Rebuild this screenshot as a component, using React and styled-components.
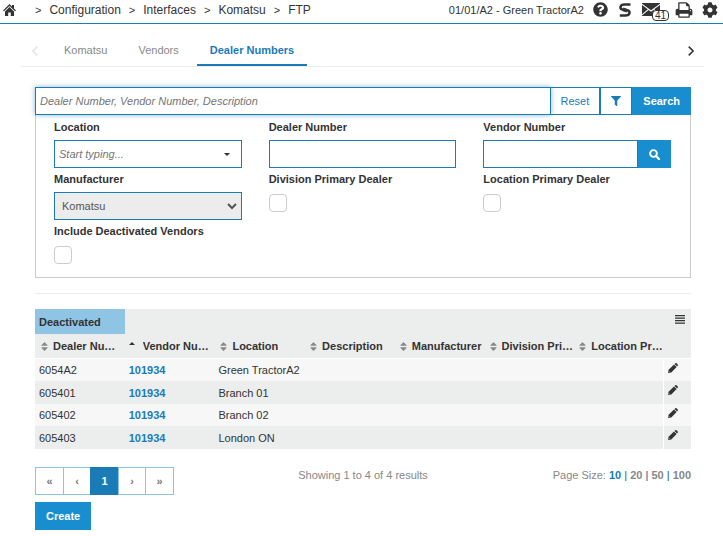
import React from "react";
import styled, { createGlobalStyle } from "styled-components";
import { FaQuestionCircle, FaCog, FaFilter, FaSort } from "react-icons/fa";

const GlobalStyle = createGlobalStyle`
  *, *::before, *::after {
    box-sizing: border-box;
  }

  body {
    margin: 0;
    background: #fff;
    color: #333;
    font-family: "Liberation Sans", Arial, sans-serif;
    font-size: 11px;
    line-height: 16px;
  }

  button, input, select {
    font: inherit;
    color: inherit;
    margin: 0;
    border-radius: 0;
  }

  button {
    padding: 0;
    cursor: pointer;
  }

  svg {
    display: block;
  }
`;

const TopBar = styled.header`
  display: flex;
  align-items: flex-start;
  justify-content: space-between;
  height: 24px;
  padding: 0 5px 0 3px;
  border-bottom: 1px solid #1a7bb7;
`;

const Crumbs = styled.nav`
  display: flex;
  align-items: center;
  gap: 8px;
  height: 20px;
  font-size: 12px;
`;

const CrumbLink = styled.a`
  color: #333;
  text-decoration: none;
`;

const HomeLink = styled(CrumbLink)`
  margin-right: 11px;
`;

const Separator = styled.span`
  font-size: 11px;
`;

const Tools = styled.div`
  display: flex;
  align-items: center;
  height: 19px;
`;

const Branch = styled.span`
  margin-right: 2px;
`;

const ToolButton = styled.button`
  position: relative;
  display: flex;
  justify-content: center;
  width: ${(props) => props.$width}px;
  border: none;
  background: none;
`;

const Badge = styled.span`
  position: absolute;
  left: 16px;
  top: 7px;
  height: 11px;
  padding: 0 2px;
  border: 1px solid #333;
  border-radius: 4px;
  background: #fff;
  font-size: 10px;
  line-height: 9px;
`;

const Tabs = styled.nav`
  display: flex;
  align-items: center;
  gap: 5px;
  height: 43px;
  margin: 0 19px 0 21px;
  padding-right: 10px;
  border-bottom: 1px solid #ececec;
`;

const TabArrow = styled.button`
  display: flex;
  width: ${(props) => (props.$end ? "6px" : "25px")};
  margin-left: ${(props) => (props.$end ? "auto" : "0")};
  padding: ${(props) => (props.$end ? "12px 0 0" : "12px 0 0 11px")};
  border: none;
  background: none;
  color: ${(props) => (props.disabled ? "#e4e4e4" : "#333")};
`;

const Tab = styled.a`
  align-self: stretch;
  padding: 18px 13px 0;
  border-bottom: 2px solid ${(props) => (props.$active ? "#1a7bb7" : "transparent")};
  color: ${(props) => (props.$active ? "#1a7bb7" : "#888")};
  font-weight: ${(props) => (props.$active ? "bold" : "normal")};
  text-decoration: none;
`;

const Content = styled.main`
  padding: 20px 32px 0 35px;
`;

const SearchBar = styled.div`
  display: flex;
  height: 28px;
`;

const Field = styled.input`
  flex: 1;
  width: 100%;
  min-width: 0;
  height: 28px;
  padding: 0 4px;
  border: 1px solid #1a7bb7;
  background: #fff;
  outline: none;

  &::placeholder {
    color: #757575;
    font-style: italic;
    opacity: 1;
  }
`;

const SearchField = styled(Field)`
  position: relative;
  box-shadow: 0 0 5px rgba(26, 123, 183, 0.55);
`;

const Button = styled.button`
  display: flex;
  align-items: center;
  justify-content: center;
  height: 28px;
  padding: 0 10px;
  border: 1px solid #188dd0;
  background: #188dd0;
  color: #fff;
  font-weight: bold;
`;

const OutlineButton = styled(Button)`
  border-color: #1a7bb7;
  border-left-width: ${(props) => (props.$joined ? "0" : "1px")};
  background: #fff;
  color: #1a7bb7;
  font-weight: normal;
`;

const Filters = styled.div`
  display: grid;
  grid-template-columns: repeat(3, 1fr);
  column-gap: 27px;
  padding: 0 19px 6px 18px;
  border: 1px solid #ccc;
  border-top: none;
`;

const Group = styled.div`
  height: 52px;
`;

const Label = styled.label`
  display: block;
  height: 25px;
  padding-top: 4px;
  font-weight: bold;
`;

const InputRow = styled.div`
  display: flex;
  position: relative;
`;

const DropButton = styled.button`
  position: absolute;
  right: 1px;
  top: 1px;
  width: 26px;
  height: 26px;
  padding-left: 9px;
  border: none;
  background: none;
`;

const Select = styled.select`
  width: 100%;
  height: 28px;
  padding: 0 7px;
  border: 1px solid #1a7bb7;
  background: #ececec;
  color: #555;
  opacity: 1;
  appearance: none;
`;

const SelectArrow = styled.span`
  position: absolute;
  right: 5px;
  top: 11px;
  color: #555;
  pointer-events: none;
`;

const Checkbox = styled.input`
  display: block;
  width: 18px;
  height: 18px;
  margin: 2px 0 0;
  border: 1px solid #ccc;
  border-radius: 4px;
  background: #fff;
  appearance: none;

  &:checked {
    background: #1a7bb7;
  }
`;

const Divider = styled.hr`
  height: 1px;
  margin: 15px 0;
  border: none;
  background: #ececec;
`;

const Table = styled.table`
  width: 100%;
  table-layout: fixed;
  border-collapse: separate;
  border-spacing: 0;
`;

const ActionCol = styled.col`
  width: 28px;
`;

const LegendCell = styled.td`
  height: 25px;
  padding: 0 4px;
  background: ${(props) => (props.$marked ? "#8fc4e4" : "#eceeed")};
  font-weight: bold;
`;

const MenuButton = styled.button`
  display: block;
  margin: -4px 0 0 auto;
  padding: 2px;
  border: none;
  background: none;
`;

const HeadCell = styled.th`
  height: 25px;
  padding: 0 0 0 4px;
  border-bottom: 1px solid #fff;
  background: #eceeed;
  text-align: left;
`;

const SortButton = styled.button`
  display: flex;
  align-items: center;
  gap: 5px;
  width: 100%;
  border: none;
  background: none;
  color: #888;
`;

const SortIcon = styled.span`
  flex: none;
  width: 9px;
  padding-bottom: ${(props) => (props.$sorted ? "5px" : "0")};
`;

const HeadText = styled.span`
  overflow: hidden;
  color: #333;
  font-weight: bold;
  text-overflow: ellipsis;
  white-space: nowrap;
`;

const Row = styled.tr`
  height: 22px;
  background: #f7f7f7;

  &:nth-child(even) {
    height: 23px;
    background: #eceeed;
  }
`;

const Cell = styled.td`
  padding: 0 4px;
  white-space: nowrap;
`;

const EditCell = styled(Cell)`
  border-left: 1px solid #fff;
`;

const EditButton = styled.button`
  display: block;
  margin-bottom: 5px;
  border: none;
  background: none;
`;

const VendorLink = styled.a`
  color: #1a7bb7;
  font-weight: bold;
  text-decoration: none;
`;

const TableFooter = styled.div`
  display: grid;
  grid-template-columns: 1fr auto 1fr;
  margin: 18px 0 7px;
  color: #888;
`;

const Pager = styled.nav`
  display: flex;
`;

const PageButton = styled.button`
  width: ${(props) => (props.$narrow ? "28px" : "29px")};
  height: 28px;
  margin-right: -1px;
  border: 1px solid ${(props) => (props.$active ? "#1a7bb7" : "#8cc3e3")};
  background: ${(props) => (props.$active ? "#1a7bb7" : "#fff")};
  color: ${(props) => (props.$active ? "#fff" : "#777")};
  font-weight: bold;
`;

const PageSize = styled.div`
  justify-self: end;
  color: #1a5b8c;
`;

const Muted = styled.span`
  color: #888;
`;

const SizeLink = styled.a`
  color: ${(props) => (props.$active ? "#1a7bb7" : "#888")};
  font-weight: bold;
  text-decoration: none;
`;

const HomeIcon = () => (
  <svg width="13" height="12" viewBox="0 0 13 12" fill="#333">
    <path d="M6.5 0 9 2.5V1h2v3.5L13 6.4l-1 .9L6.5 2 1 7.3l-1-.9z" />
    <path d="M6.5 3.1 11 7.4V12H7.8V8.5H5.2V12H2V7.4z" />
  </svg>
);

const SwirlIcon = () => (
  <svg width="12" height="14" viewBox="0 0 12 14" fill="none" stroke="#333" strokeWidth="2.5">
    <path d="M11.5 1.4H5.600C.6 1.4.4 5.900 3.700 6.700L8 8.200" />
    <path d="M.8 12.600H6.200C11.400 12.600 11.600 8.100 8.300 7.300L4 5.800" />
  </svg>
);

const MailIcon = () => (
  <svg width="18" height="13" viewBox="0 0 18 13" fill="#333">
    <path d="M0 0h18v.8L9 7.300 0 .8z" />
    <path d="M0 2 5.800 6.300 0 11.300z" />
    <path d="M18 2 12.200 6.300 18 11.300z" />
    <path d="M6.600 7 9 8.700 11.400 7 18 12.500v.5H0v-.5z" />
  </svg>
);

const PrintIcon = () => (
  <svg width="18" height="18" viewBox="0 0 1792 1792" fill="#333">
    <path d="M448 1536h896v-256h-896v256zm0-640h896v-384h-160q-40 0-68-28t-28-68v-160h-640v640zm1152 64q0-26-19-45t-45-19-45 19-19 45 19 45 45 19 45-19 19-45zm128 0v416q0 13-9.500 22.500t-22.500 9.500h-224v160q0 40-28 68t-68 28h-960q-40 0-68-28t-28-68v-160h-224q-13 0-22.500-9.500t-9.500-22.500v-416q0-79 56.500-135.500t135.500-56.500h64v-544q0-40 28-68t68-28h672q40 0 88 20t76 48l152 152q28 28 48 76t20 88v256h64q79 0 135.500 56.500t56.500 135.500z" />
  </svg>
);

const FindIcon = () => (
  <svg width="11" height="11" viewBox="0 0 11 11" fill="none" stroke="currentColor">
    <circle cx="4.500" cy="4.500" r="3.400" strokeWidth="1.900" />
    <path d="m7 7 3 3" strokeWidth="2.400" strokeLinecap="round" />
  </svg>
);

const MenuIcon = () => (
  <svg width="10" height="9" viewBox="0 0 10 9" fill="#333">
    <path d="M0 0h10v1.200H0zM0 2.500h10v1.200H0zM0 5h10v1.200H0zM0 7.500h10v1.200H0z" />
  </svg>
);

const PencilIcon = () => (
  <svg width="10" height="10" viewBox="0 0 10 10" fill="#333">
    <path d="M0 10 .6 6.700 6 1.400l2.600 2.600L3.300 9.400z" />
    <path d="M6.500.9 7.300.2q.7-.4 1.300.1l1.100 1.100q.5.700 0 1.300l-.7.800z" />
    <path d="M.9 8.300l.8.800" stroke="#eee" strokeWidth=".7" />
  </svg>
);

const Caret = ({ up }) => (
  <svg width="6" height="3" viewBox="0 0 6 3" fill="#333">
    <path d={up ? "M0 3 3 0l3 3z" : "M0 0h6L3 3z"} />
  </svg>
);

const Chevron = () => (
  <svg width="10" height="7" viewBox="0 0 10 7" fill="none" stroke="currentColor" strokeWidth="2">
    <path d="m1 1 4 4 4-4" />
  </svg>
);

const TabChevron = ({ left }) => (
  <svg width="6" height="10" viewBox="0 0 6 10" fill="none" stroke="currentColor" strokeWidth="1.500">
    <path d={left ? "M5.300.6.900 5l4.400 4.400" : "M.7.6 5.100 5 .7 9.400"} />
  </svg>
);

const crumbs = ["Configuration", "Interfaces", "Komatsu", "FTP"];

const tabs = ["Komatsu", "Vendors", "Dealer Numbers"];

const columns = [
  "Dealer Number",
  "Vendor Number",
  "Location",
  "Description",
  "Manufacturer",
  "Division Primary Dealer",
  "Location Primary Dealer",
];

const dealers = [
  { number: "6054A2", vendor: "101934", location: "Green TractorA2" },
  { number: "605401", vendor: "101934", location: "Branch 01" },
  { number: "605402", vendor: "101934", location: "Branch 02" },
  { number: "605403", vendor: "101934", location: "London ON" },
];

const pages = [
  { text: "«", label: "First page" },
  { text: "‹", label: "Previous page", narrow: true },
  { text: "1", label: "Page 1", active: true },
  { text: "›", label: "Next page", narrow: true },
  { text: "»", label: "Last page" },
];

const sizes = [10, 20, 50, 100];

const Header = () => (
  <TopBar>
    <Crumbs aria-label="Breadcrumb">
      <HomeLink href="#home" aria-label="Home">
        <HomeIcon />
      </HomeLink>
      {crumbs.map((crumb) => (
        <React.Fragment key={crumb}>
          <Separator>&gt;</Separator>
          <CrumbLink href={`#${crumb}`}>{crumb}</CrumbLink>
        </React.Fragment>
      ))}
    </Crumbs>
    <Tools>
      <Branch>01/01/A2 - Green TractorA2</Branch>
      <ToolButton $width={28} aria-label="Help">
        <FaQuestionCircle size={15} color="#333" />
      </ToolButton>
      <ToolButton $width={22} aria-label="Support">
        <SwirlIcon />
      </ToolButton>
      <ToolButton $width={30} aria-label="Messages">
        <MailIcon />
        <Badge>41</Badge>
      </ToolButton>
      <ToolButton $width={36} aria-label="Print">
        <PrintIcon />
      </ToolButton>
      <ToolButton $width={16} aria-label="Settings">
        <FaCog size={16} color="#333" />
      </ToolButton>
    </Tools>
  </TopBar>
);

const CheckGroup = ({ id, label }) => (
  <Group>
    <Label htmlFor={id}>{label}</Label>
    <Checkbox id={id} type="checkbox" />
  </Group>
);

const FilterPanel = () => (
  <Filters>
    <Group>
      <Label htmlFor="location">Location</Label>
      <InputRow>
        <Field id="location" placeholder="Start typing..." />
        <DropButton aria-label="Show locations">
          <Caret />
        </DropButton>
      </InputRow>
    </Group>
    <Group>
      <Label htmlFor="dealer">Dealer Number</Label>
      <Field id="dealer" />
    </Group>
    <Group>
      <Label htmlFor="vendor">Vendor Number</Label>
      <InputRow>
        <Field id="vendor" />
        <Button aria-label="Find vendor">
          <FindIcon />
        </Button>
      </InputRow>
    </Group>
    <Group>
      <Label htmlFor="manufacturer">Manufacturer</Label>
      <InputRow>
        <Select id="manufacturer" disabled>
          <option>Komatsu</option>
        </Select>
        <SelectArrow>
          <Chevron />
        </SelectArrow>
      </InputRow>
    </Group>
    <CheckGroup id="division" label="Division Primary Dealer" />
    <CheckGroup id="primary" label="Location Primary Dealer" />
    <CheckGroup id="deactivated" label="Include Deactivated Vendors" />
  </Filters>
);

const DealerTable = () => (
  <Table>
    <colgroup>
      {columns.map((column) => (
        <col key={column} />
      ))}
      <ActionCol />
    </colgroup>
    <thead>
      <tr>
        <LegendCell $marked>Deactivated</LegendCell>
        <LegendCell colSpan={7}>
          <MenuButton aria-label="Table menu">
            <MenuIcon />
          </MenuButton>
        </LegendCell>
      </tr>
      <tr>
        {columns.map((column, i) => (
          <HeadCell key={column}>
            <SortButton>
              <SortIcon $sorted={i === 1}>
                {i === 1 ? <Caret up /> : <FaSort size={11} />}
              </SortIcon>
              <HeadText>{column}</HeadText>
            </SortButton>
          </HeadCell>
        ))}
        <HeadCell />
      </tr>
    </thead>
    <tbody>
      {dealers.map((dealer) => (
        <Row key={dealer.number}>
          <Cell>{dealer.number}</Cell>
          <Cell>
            <VendorLink href={`#${dealer.vendor}`}>{dealer.vendor}</VendorLink>
          </Cell>
          <Cell>{dealer.location}</Cell>
          <Cell />
          <Cell />
          <Cell />
          <Cell />
          <EditCell>
            <EditButton aria-label={`Edit ${dealer.number}`}>
              <PencilIcon />
            </EditButton>
          </EditCell>
        </Row>
      ))}
    </tbody>
  </Table>
);

const App = () => {
  return (
    <>
      <GlobalStyle />
      <Header />
      <Tabs>
        <TabArrow disabled aria-label="Previous tabs">
          <TabChevron left />
        </TabArrow>
        {tabs.map((tab) => (
          <Tab key={tab} href={`#${tab}`} $active={tab === "Dealer Numbers"}>
            {tab}
          </Tab>
        ))}
        <TabArrow $end aria-label="Next tabs">
          <TabChevron />
        </TabArrow>
      </Tabs>
      <Content>
        <SearchBar>
          <SearchField
            autoFocus
            aria-label="Search dealers"
            placeholder="Dealer Number, Vendor Number, Description"
          />
          <OutlineButton $joined>Reset</OutlineButton>
          <OutlineButton aria-label="Filter">
            <FaFilter size={10} />
          </OutlineButton>
          <Button>Search</Button>
        </SearchBar>
        <FilterPanel />
        <Divider />
        <DealerTable />
        <TableFooter>
          <Pager aria-label="Pages">
            {pages.map((page) => (
              <PageButton
                key={page.label}
                aria-label={page.label}
                $active={page.active}
                $narrow={page.narrow}
              >
                {page.text}
              </PageButton>
            ))}
          </Pager>
          <span>Showing 1 to 4 of 4 results</span>
          <PageSize>
            <Muted>Page Size: </Muted>
            {sizes.map((size, i) => (
              <React.Fragment key={size}>
                {i > 0 && " | "}
                <SizeLink href={`#${size}`} $active={size === 10}>
                  {size}
                </SizeLink>
              </React.Fragment>
            ))}
          </PageSize>
        </TableFooter>
        <Button>Create</Button>
      </Content>
    </>
  );
};

export default App;
